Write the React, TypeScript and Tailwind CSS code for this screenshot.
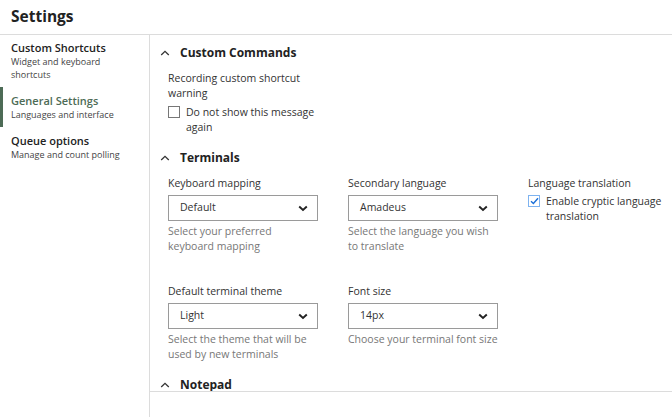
import React, { useState } from 'react';

const font = { fontFamily: '"Open Sans", "Noto Sans", sans-serif' };

interface NavItem {
  id: string;
  title: string;
  sub: string;
}

const navItems: NavItem[] = [
  { id: 'shortcuts', title: 'Custom Shortcuts', sub: 'Widget and keyboard shortcuts' },
  { id: 'general', title: 'General Settings', sub: 'Languages and interface' },
  { id: 'queue', title: 'Queue options', sub: 'Manage and count polling' },
];

const Caret = () => (
  <svg width="10" height="6" viewBox="0 0 10 6" fill="none" className="shrink-0">
    <path d="M1.2 5L5 1.4L8.8 5" stroke="#333" strokeWidth="1.3" />
  </svg>
);

const ChevronDown = () => (
  <svg width="10" height="7" viewBox="0 0 10 7" fill="none">
    <path d="M1.2 1.5L5 5L8.8 1.5" stroke="#222" strokeWidth="1.9" />
  </svg>
);

const SectionHeader = ({ title }: { title: string }) => (
  <div className="flex items-center gap-[10px] pl-[10px] h-[20px]">
    <Caret />
    <span className="text-[12px] font-bold text-[#222]">{title}</span>
  </div>
);

const Checkbox = ({ checked, label, width }: { checked: boolean; label: string; width: string }) => (
  <label className="flex items-start gap-[6px] text-[10.5px] leading-[15px] text-[#333]">
    <span
      className={`mt-[1.5px] w-[12px] h-[12px] shrink-0 flex items-center justify-center border ${
        checked ? 'border-[#7eb3f0] bg-white' : 'border-[#777] bg-white'
      }`}
    >
      {checked && (
        <svg width="9" height="8" viewBox="0 0 9 8" fill="none">
          <path d="M1 4.2L3.4 6.5L8 1.2" stroke="#1a6fd8" strokeWidth="1.4" />
        </svg>
      )}
    </span>
    <span className={width}>{label}</span>
  </label>
);

const SelectField = ({ label, value, help }: { label: string; value: string; help: string }) => (
  <div className="w-[150px] flex flex-col">
    <div className="text-[10.5px] leading-[15px] text-[#333]">{label}</div>
    <div className="mt-[4.5px] h-[26px] border border-[#9a9a9a] flex items-center justify-between pl-[11px] pr-[9px]">
      <span className="text-[10.5px] text-[#333]">{value}</span>
      <ChevronDown />
    </div>
    <div className="mt-[2.5px] text-[10.5px] leading-[15px] text-[#777]">{help}</div>
  </div>
);

export default function App() {
  const [active] = useState('general');

  return (
    <div className="w-[672px] h-[417px] bg-white flex flex-col overflow-hidden" style={font}>
      <div className="h-[35px] border-b border-[#dcdcdc] flex items-center px-[11px] shrink-0">
        <h1 className="text-[15.5px] font-bold text-[#222]">Settings</h1>
      </div>
      <div className="flex flex-1 min-h-0">
        <aside className="w-[150px] shrink-0 border-r border-[#dcdcdc] mt-[-1.5px]">
          {navItems.map((item) => (
            <div key={item.id} className="relative pl-[11px] pr-[6px] py-[6px]">
              {item.id === active && (
                <div className="absolute left-0 top-0 bottom-0 w-[3px] bg-[#4d6b56]" />
              )}
              <div
                className={`text-[11px] font-semibold leading-[15px] ${
                  item.id === active ? 'text-[#4d6b56]' : 'text-[#222]'
                }`}
              >
                {item.title}
              </div>
              <div className="text-[9px] leading-[13px] text-[#444] w-[125px]">{item.sub}</div>
            </div>
          ))}
        </aside>
        <main className="flex-1 flex flex-col">
          <div className="h-[357px] shrink-0 border-b border-[#dcdcdc] pt-[8px] overflow-hidden">
            <SectionHeader title="Custom Commands" />
            <div className="pl-[18px] pt-[7.5px]">
              <div className="text-[10.5px] leading-[15px] text-[#333] w-[140px]">
                Recording custom shortcut warning
              </div>
              <div className="mt-[4px]">
                <Checkbox checked={false} label="Do not show this message again" width="w-[135px]" />
              </div>
            </div>
            <div className="mt-[13.5px]">
              <SectionHeader title="Terminals" />
            </div>
            <div className="pl-[18px] pt-[7.5px] grid grid-cols-[180px_180px_144px] gap-y-[30px]">
              <SelectField
                label="Keyboard mapping"
                value="Default"
                help="Select your preferred keyboard mapping"
              />
              <SelectField
                label="Secondary language"
                value="Amadeus"
                help="Select the language you wish to translate"
              />
              <div className="flex flex-col">
                <div className="text-[10.5px] leading-[15px] text-[#333]">Language translation</div>
                <div className="mt-[3px]">
                  <Checkbox checked={true} label="Enable cryptic language translation" width="w-[122px]" />
                </div>
              </div>
              <SelectField
                label="Default terminal theme"
                value="Light"
                help="Select the theme that will be used by new terminals"
              />
              <SelectField
                label="Font size"
                value="14px"
                help="Choose your terminal font size"
              />
            </div>
            <div className="mt-[13.5px]">
              <SectionHeader title="Notepad" />
            </div>
          </div>
        </main>
      </div>
    </div>
  );
}
